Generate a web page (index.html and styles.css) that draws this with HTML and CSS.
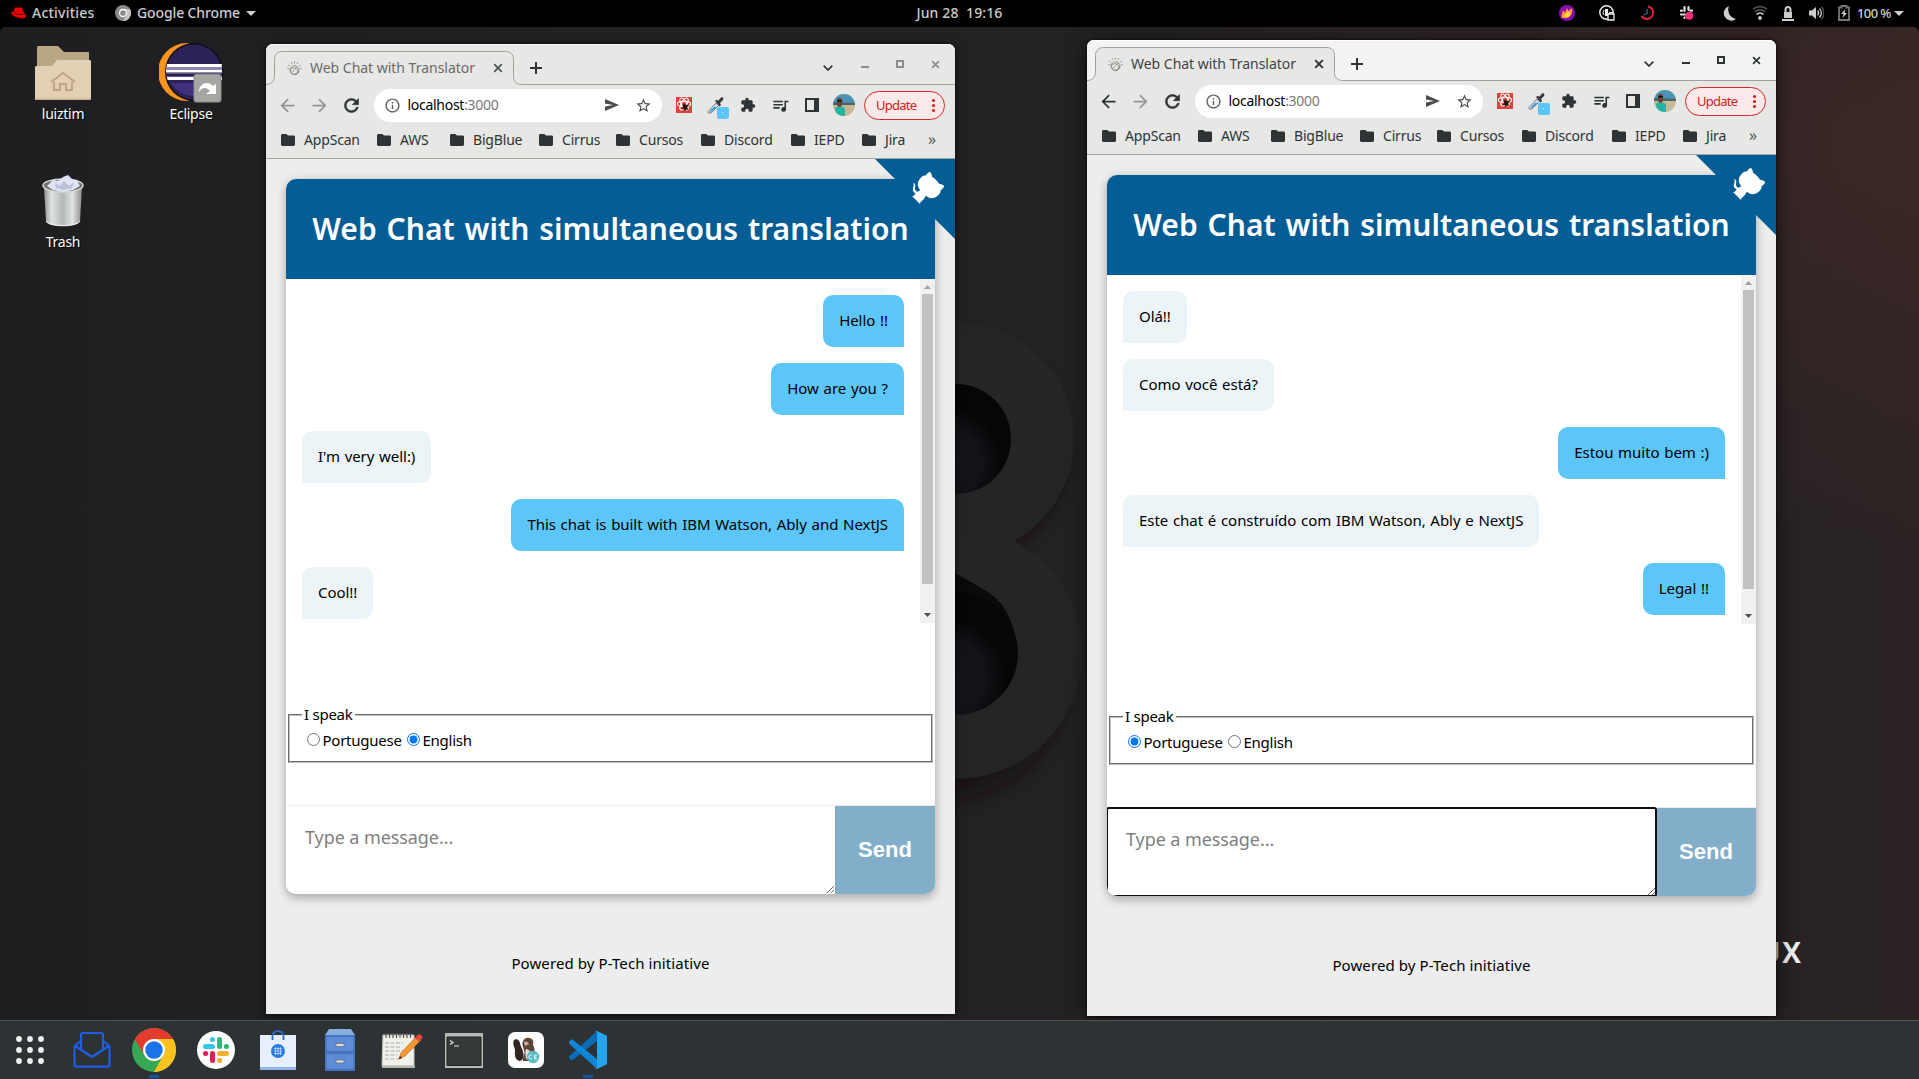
FILE: index.html
```html
<!DOCTYPE html>
<html lang="en">
<head>
<meta charset="utf-8">
<title>Desktop</title>
<link rel="stylesheet" href="styles.css">
</head>
<body>

<svg class="sprite" aria-hidden="true">
  <symbol id="i-back" viewBox="0 0 24 24"><path d="M20 11H7.83l5.59-5.59L12 4l-8 8 8 8 1.41-1.41L7.83 13H20z"/></symbol>
  <symbol id="i-forward" viewBox="0 0 24 24"><path d="M4 11h12.17l-5.59-5.59L12 4l8 8-8 8-1.41-1.41L16.17 13H4z"/></symbol>
  <symbol id="i-reload" viewBox="0 0 24 24"><path d="M17.65 6.35A7.96 7.96 0 0 0 12 4c-4.42 0-7.99 3.58-7.99 8s3.57 8 7.99 8c3.73 0 6.84-2.55 7.73-6h-2.08A5.99 5.99 0 0 1 12 18c-3.31 0-6-2.69-6-6s2.69-6 6-6c1.66 0 3.14.69 4.22 1.78L13 11h7V4z" stroke="currentColor" stroke-width=".7"/></symbol>
  <symbol id="i-info" viewBox="0 0 24 24"><path d="M11 7h2v2h-2zm0 4h2v6h-2zm1-9C6.48 2 2 6.48 2 12s4.48 10 10 10 10-4.48 10-10S17.52 2 12 2zm0 18c-4.41 0-8-3.59-8-8s3.59-8 8-8 8 3.59 8 8-3.59 8-8 8z"/></symbol>
  <symbol id="i-send" viewBox="0 0 14 12"><path d="M0 0l14 6-14 6V7.4L8 6 0 4.6z"/></symbol>
  <symbol id="i-star" viewBox="0 0 24 24"><path d="M22 9.24l-7.19-.62L12 2 9.19 8.63 2 9.24l5.46 4.73L5.82 21 12 17.27 18.18 21l-1.63-7.03zM12 15.4l-3.76 2.27 1-4.28-3.32-2.88 4.38-.38L12 6.1l1.71 4.04 4.38.38-3.32 2.88 1 4.28z"/></symbol>
  <symbol id="i-puzzle" viewBox="0 0 24 24"><path d="M20.5 11H19V7c0-1.1-.9-2-2-2h-4V3.5a2.5 2.5 0 0 0-5 0V5H4c-1.1 0-1.99.9-1.99 2v3.8H3.5a2.7 2.7 0 0 1 0 5.4H2V20c0 1.1.9 2 2 2h3.8v-1.5a2.7 2.7 0 0 1 5.4 0V22H17c1.1 0 2-.9 2-2v-4h1.5a2.5 2.5 0 0 0 0-5z"/></symbol>
  <symbol id="i-queue" viewBox="0 0 24 24"><path d="M15 6H3v2h12zm0 4H3v2h12zM3 16h8v-2H3zM17 6v8.18A3 3 0 1 0 19 17V8h3V6z"/></symbol>
  <symbol id="i-panel" viewBox="0 0 14 14"><path d="M0 0h14v14H0zm2 2v10h7V2z" fill-rule="evenodd"/></symbol>
  <symbol id="i-folder" viewBox="0 0 14 12"><path d="M1.4 0h4L7 1.6h5.6c.8 0 1.4.6 1.4 1.400v7.600c0 .8-.6 1.400-1.400 1.400H1.400C.6 12 0 11.400 0 10.600V1.400C0 .6.6 0 1.400 0z"/></symbol>
  <symbol id="i-cross" viewBox="0 0 10 10"><path d="M1.2 1.200l7.600 7.600m0-7.600L1.200 8.800" fill="none" stroke="currentColor" stroke-width="1.900"/></symbol>
  <symbol id="i-plus" viewBox="0 0 12 12"><path d="M6 0v12M0 6h12" fill="none" stroke="currentColor" stroke-width="2"/></symbol>
  <symbol id="i-chevron" viewBox="0 0 10 6"><path d="M.7.700L5 5 9.300.700" fill="none" stroke="currentColor" stroke-width="1.700"/></symbol>
  <symbol id="i-min" viewBox="0 0 8 8"><path d="M0 6h8v2H0z"/></symbol>
  <symbol id="i-max" viewBox="0 0 8 8"><path d="M0 0h8v8H0zm2 2v4h4V2z" fill-rule="evenodd"/></symbol>
  <symbol id="i-favicon" viewBox="0 0 16 16"><g fill="none" stroke="currentColor" stroke-width=".8"><circle cx="8" cy="9.800" r="4.800"/><path d="M4.500 8.500c1-2 5.500-2 7 1 1 2.500-1 4.500-3 5M4.200 7.500c-1.200 2 0 5.500 2.800 6.500 2.500.5 5-1.500 5-4M11 6.300L5.500 12M8 .4v2.200M4.400 1.300l.9 1.900M11.600 1.300l-.9 1.900M1.200 4.200l1.800 1.400M14.800 4.200L13 5.600M.3 8l1.800.3M15.700 8l-1.800.3"/></g></symbol>
  <symbol id="i-react" viewBox="0 0 16 16"><path d="M0 0h16v16H0z" fill="#d9453c"/><g fill="none" stroke="#fff" stroke-width="1.100"><ellipse cx="8" cy="7" rx="6.600" ry="2.700"/><ellipse cx="8" cy="7" rx="6.600" ry="2.700" transform="rotate(60 8 7)"/><ellipse cx="8" cy="7" rx="6.600" ry="2.700" transform="rotate(120 8 7)"/></g><path d="M7 7.500l2-.5 1 1 2-.5 1 1.500-2 1 1 3-2-.5-1 1.500-1.500-2-2 .5 1-2z" fill="#2a1412"/></symbol>
  <symbol id="i-dropper" viewBox="0 0 22 22"><path d="M1 14.500L9 6l2.500 2.500L4 16H1z" fill="#c6dcec" stroke="#7d8990"/><path d="M2.500 14.500L7 10h3l-6 5z" fill="#3c9ee0"/><path d="M8 4l1.500-1.200 1.700 1L14 .5c2-1 3 .7 2 2.500l-3 3 1 2-1.500 1.500z" fill="#3a3a3e"/><rect x="10" y="10" width="12" height="12" rx="2" fill="#5dc6f8"/><path d="M15 15h1v1h-1z" fill="#d8f0fc"/></symbol>
  <symbol id="i-avatar" viewBox="0 0 22 22"><clipPath id="avatar-clip"><circle cx="11" cy="11" r="11"/></clipPath><g clip-path="url(#avatar-clip)"><path d="M0 0h22v22H0z" fill="#c9b796"/><path d="M0 0h22v8.500H0z" fill="#4d93b8"/><path d="M0 8l22 .5V11H0z" fill="#3f6873"/><path d="M2 14c2-2 9-2 10 1v7H3z" fill="#22b59f"/><path d="M4 6c0-3 5-3 5 0v4c0 4-5 4-5 0z" fill="#6b4433"/><path d="M4 6h5v1.500H4z" fill="#141414"/></g></symbol>
  <symbol id="i-octocat" viewBox="0 0 250 250"><path d="M0 0l250 250V0z" fill="#045d95"/><path d="M128.3 109C113.800 99.700 119 89.600 119 89.600c3-6.900 1.500-11 1.500-11-1.300-6.600 2.900-2.300 2.900-2.300 3.900 4.600 2.100 11 2.100 11-2.600 10.300 5.100 14.600 8.900 15.900zM115 115c-.1.100 3.700 1.500 4.800.4l13.900-13.800c3.200-2.400 6.200-3.200 8.500-3-8.400-10.600-14.700-24.200 1.600-40.600 4.700-4.600 10.200-6.800 15.900-7 .6-1.600 3.500-7.400 11.700-10.900 0 0 4.700 2.400 7.400 16.100 4.300 2.400 8.400 5.600 12.100 9.200 3.600 3.600 6.800 7.800 9.200 12.200 13.700 2.600 16.200 7.300 16.200 7.300-3.600 8.200-9.400 11.100-10.900 11.700-.3 5.800-2.400 11.200-7.100 15.900-16.400 16.400-30 10-40.600 1.600.2 2.800-1 6.800-5 10.800L141 136.500c-1.200 1.200.6 5.400.8 5.300z" fill="#fff"/></symbol>
  <symbol id="i-up" viewBox="0 0 7 4"><path d="M0 4l3.500-4L7 4z"/></symbol>
  <symbol id="i-down" viewBox="0 0 7 4"><path d="M0 0l3.500 4L7 0z"/></symbol>
</svg>

<header class="topbar">
  <div class="topbar-left">
    <svg class="hat" viewBox="0 0 15 12"><path d="M3.500 1.500C4 .3 5 0 6 .4c1.300.5 2 .3 3-.1 2-.6 3 1.500 3.500 5.200C15 7 16 9.500 13.500 11 10 12.500 2 10 .3 6.500-.3 5 1 4.700 2.600 4.600z" fill="#e00"/><path d="M2.800 5c1.500 2 6 3.400 9.500 2" fill="none" stroke="#300" stroke-width=".9"/></svg>
    <span class="tb-activities">Activities</span>
    <svg class="tb-chrome" viewBox="0 0 16 16"><circle cx="8" cy="8" r="8" fill="#8b8b8b"/><path d="M8 4h7A8 8 0 0 1 8 16l4-6z" fill="#c4c4c4"/><circle cx="8" cy="8" r="3.500" fill="#8b8b8b" stroke="#fff" stroke-width="1.300"/></svg>
    <span class="tb-app">Google Chrome</span>
    <svg class="tb-caret" viewBox="0 0 10 5"><path d="M0 0h10L5 5z" fill="#ccc"/></svg>
  </div>
  <div class="clock">Jun 28&nbsp; 19:16</div>
  <div class="tray">
    <svg viewBox="0 0 16 16"><circle cx="8" cy="8" r="8" fill="#8a0fae"/><path d="M3 13c-1-4 1-5 1-8l2 3 2-5 1.500 3L13 3c1 4-1 9-5 10z" fill="#ff9d2e"/><path d="M5 12c0-3 3-3 4-6l2 2c1 3-2 5-6 4z" fill="#ffd84a"/></svg>
    <svg viewBox="0 0 16 16"><circle cx="7.500" cy="7.500" r="6.700" fill="none" stroke="#eee" stroke-width="1.400"/><path d="M6 4h3v7H6z" fill="#eee"/><path d="M5 5a4 4 0 0 0 0 5" stroke="#eee" fill="none"/><path d="M9 9h6v6H9z" fill="#000" stroke="#eee" stroke-width="1.300"/><path d="M10.500 9V7.500h3V9" fill="none" stroke="#eee"/></svg>
    <svg viewBox="0 0 16 16"><path d="M9 1.500A6.300 6.300 0 1 1 2.500 11" fill="none" stroke="#e0203c" stroke-width="1.900"/><path d="M8 4v4.500L4.500 10" fill="none" stroke="#2a6d86" stroke-width="1.300"/></svg>
    <svg viewBox="0 0 16 16"><g stroke="#ddd" stroke-width="2.200" stroke-linecap="round"><path d="M5.500 2v4M2 5.700h1M9.500 2v3M11.500 5.700h1.500M2 9.500h4M5.500 12.500v.5"/></g><circle cx="10.300" cy="10.800" r="4" fill="#f02d78"/></svg>
    <svg class="tray-moon" viewBox="0 0 16 16"><path d="M7 1a9.500 9.500 0 0 0 7 13A7.500 7.500 0 1 1 7 1z" fill="#ccc"/></svg>
    <svg viewBox="0 0 16 16"><circle cx="8" cy="13" r="1.900" fill="#ccc"/><path d="M4.500 9.500a5 5 0 0 1 7 0" fill="none" stroke="#ccc" stroke-width="1.700"/><path d="M2.700 7a7.800 7.800 0 0 1 10.600 0M1 4.300a10.500 10.500 0 0 1 14 0" fill="none" stroke="#4d4d4d" stroke-width="1.700"/></svg>
    <svg viewBox="0 0 16 16"><path d="M4 7h8v6H4zM2 14h12v2H2z" fill="#ccc"/><path d="M5.500 7.500V4.500a2.500 2.500 0 0 1 5 0v3" fill="none" stroke="#ccc" stroke-width="2"/></svg>
    <svg viewBox="0 0 16 16"><path d="M1 5.500h3L8 2v12l-4-3.500H1z" fill="#ccc"/><path d="M9.700 5.500a4 4 0 0 1 0 5M11.500 3.500a6.500 6.500 0 0 1 0 9" fill="none" stroke="#ccc" stroke-width="1.300"/><path d="M13.500 2a8.500 8.500 0 0 1 0 12" fill="none" stroke="#555" stroke-width="1.300"/></svg>
    <svg viewBox="0 0 16 16"><path d="M3 2.500h2.500V1h5v1.500H13V15H3z" fill="none" stroke="#777" stroke-width="1.800"/><path d="M9.500 4L5 9h2.500L6.500 13 11 8H8.500z" fill="#ccc"/></svg>
    <span class="battery">100 %</span>
    <svg class="tb-caret" viewBox="0 0 10 5"><path d="M0 0h10L5 5z" fill="#ccc"/></svg>
  </div>
</header>

<main class="desktop">
  <svg class="wallpaper" viewBox="0 27 1919 993" preserveAspectRatio="none">
    <defs>
      <linearGradient id="wall" x1="0" y1="0" x2="1" y2="0"><stop offset="0" stop-color="#1f1f21"/><stop offset=".4" stop-color="#222123"/><stop offset=".6" stop-color="#242123"/><stop offset=".94" stop-color="#282224"/><stop offset="1" stop-color="#2b2323"/></linearGradient>
      <radialGradient id="glow" cx="1" cy=".12" r=".4"><stop offset="0" stop-color="#4a2c28" stop-opacity=".55"/><stop offset="1" stop-color="#4a2c28" stop-opacity="0"/></radialGradient>
      <radialGradient id="hole" cx=".42" cy=".7" r=".48"><stop offset="0" stop-color="#15171c"/><stop offset=".65" stop-color="#111317"/><stop offset="1" stop-color="#070607"/></radialGradient>
      <linearGradient id="ring" x1="0" y1="0" x2="0" y2="1"><stop offset="0" stop-color="#272427"/><stop offset=".5" stop-color="#252527"/><stop offset="1" stop-color="#232425"/></linearGradient>
      <filter id="soft"><feGaussianBlur stdDeviation="9"/></filter>
    </defs>
    <path d="M0 27h1919v993H0z" fill="url(#wall)"/>
    <path d="M0 27h1919v993H0z" fill="url(#glow)"/>
    <g fill="#120d0d" opacity=".75" filter="url(#soft)"><circle cx="955" cy="449" r="110"/><circle cx="942" cy="674" r="124"/></g>
    <circle cx="957" cy="439" r="117" fill="url(#ring)"/>
    <circle cx="956" cy="439" r="55" fill="url(#hole)"/>
    <circle cx="956" cy="653" r="126" fill="url(#ring)"/>
    <path d="M955 573l28 16c18 10 28 25 33 50h-61z" fill="#0b090a"/>
    <circle cx="956" cy="653" r="62" fill="url(#hole)"/>
  </svg>
  <div class="wall-word">LINUX</div>

  <div class="shortcut home">
    <svg viewBox="0 0 56 54" width="56" height="54"><path d="M2 1.500C2 .6 2.600 0 3.500 0H23l6 6h24c.6 0 1 .4 1 1v20H2z" fill="#b9a683"/><path d="M0 21.500c0-.9.600-1.500 1.500-1.500H17l5-6h32.500c.9 0 1.500.6 1.500 1.500V53H0z" fill="#e3d0b4"/><path d="M0 52.500h56V54H0z" fill="#c5af8c"/><path d="M16 36l12-9 12 9M19 36v8h6v-6h6v6h6v-8" fill="none" stroke="#bea586" stroke-width="2"/></svg>
    <span>luiztim</span>
  </div>
  <div class="shortcut eclipse">
    <svg viewBox="0 0 64 60" width="64" height="60"><path d="M28 0a29 29 0 0 0 0 58l4-1V1z" fill="#f7941e"/><circle cx="35" cy="29" r="29" fill="#100d20"/><circle cx="35" cy="29" r="27.500" fill="#2c2255"/><path d="M12 40a27 27 0 0 0 46 0z" fill="#40307e"/><path d="M7.800 21h55v3H7.700zM7 27h56v2.500H7zM8 34h55v3H8.500z" fill="#fff"/><path d="M7 24h56v3H7zM7 29.500h56V34H7z" fill="#8d86ae"/><path d="M7 30.500h56v3H7z" fill="#2c2255"/><rect x="35" y="31.500" width="27" height="27.500" rx="2" fill="#a5a8a2" stroke="#8c8f8a"/><path d="M40 49c0-9 9-12 14-6l3-2v10H47l4-3c-3-4-8-4-11 1z" fill="#fff"/></svg>
    <span>Eclipse</span>
  </div>
  <div class="shortcut trash">
    <svg viewBox="0 0 44 52" width="44" height="52"><defs><linearGradient id="can" x1="0" x2="1" y1="0" y2="0"><stop offset="0" stop-color="#8f9490"/><stop offset=".2" stop-color="#dfe2df"/><stop offset=".5" stop-color="#b4b8b4"/><stop offset=".75" stop-color="#e2e4e2"/><stop offset="1" stop-color="#868a86"/></linearGradient></defs><path d="M3 12l2 34c1 7 33 7 34 0l2-34z" fill="url(#can)"/><ellipse cx="22" cy="10.500" rx="20" ry="6.500" fill="#6d716d" stroke="#d5d8d5" stroke-width="1.500"/><path d="M6 11l6-6 5 1 5-4 5-2 4 4 5 1 3 6-7 4-10 2-10-2z" fill="#dfe3f3"/><path d="M14 8l5 3 4-5 5 5 5-4-2 6-9 2-7-2z" fill="#b9c0d8"/><path d="M5 46c3 6 31 6 34 0" fill="none" stroke="#f0f0f0"/></svg>
    <span>Trash</span>
  </div>

  <section class="window window-left">
    <div class="tabstrip">
      <svg class="tab-outline" viewBox="0 0 689 41"><path d="M0 40.500c5 0 8.500-3 8.500-9V15.500c0-5 3-8 8-8h223c5 0 8 3 8 8v17c0 5 3 8 8 8H689V41H0z" fill="#e7e7e5"/><path d="M0 40.500c5 0 8.500-3 8.500-9V15.500c0-5 3-8 8-8h223c5 0 8 3 8 8v17c0 5 3 8 8 8H689" fill="none" stroke="#a0a09d"/></svg>
      <div class="tab"><svg class="favicon"><use href="#i-favicon"/></svg><span class="tab-title">Web Chat with Translator</span><svg class="tab-close"><use href="#i-cross"/></svg></div>
      <svg class="new-tab"><use href="#i-plus"/></svg>
      <div class="window-controls"><svg class="ctl-chevron"><use href="#i-chevron"/></svg><svg class="ctl"><use href="#i-min"/></svg><svg class="ctl"><use href="#i-max"/></svg><svg class="ctl"><use href="#i-cross"/></svg></div>
    </div>
    <div class="toolbar">
      <svg class="nav off"><use href="#i-back"/></svg><svg class="nav off"><use href="#i-forward"/></svg><svg class="nav"><use href="#i-reload"/></svg>
      <div class="address"><svg class="a-info"><use href="#i-info"/></svg><span class="url">localhost<span class="port">:3000</span></span><svg class="a-send"><use href="#i-send"/></svg><svg class="a-star"><use href="#i-star"/></svg></div>
      <div class="extensions"><svg class="e16"><use href="#i-react"/></svg><svg class="e22"><use href="#i-dropper"/></svg><svg class="e16"><use href="#i-puzzle"/></svg><svg class="e20"><use href="#i-queue"/></svg><svg class="e14"><use href="#i-panel"/></svg><svg class="eav"><use href="#i-avatar"/></svg></div>
      <div class="update"><span>Update</span><i></i></div>
    </div>
    <div class="bookmarks">
      <a><svg><use href="#i-folder"/></svg>AppScan</a><a><svg><use href="#i-folder"/></svg>AWS</a><a><svg><use href="#i-folder"/></svg>BigBlue</a><a><svg><use href="#i-folder"/></svg>Cirrus</a><a><svg><use href="#i-folder"/></svg>Cursos</a><a><svg><use href="#i-folder"/></svg>Discord</a><a><svg><use href="#i-folder"/></svg>IEPD</a><a><svg><use href="#i-folder"/></svg>Jira</a><span class="more">»</span>
    </div>
    <div class="page">
      <svg class="corner"><use href="#i-octocat"/></svg>
      <div class="card">
        <h1>Web Chat with simultaneous translation</h1>
        <div class="chat">
          <div class="messages">
            <p class="msg mine">Hello !!</p>
            <p class="msg mine">How are you ?</p>
            <p class="msg">I'm very well:)</p>
            <p class="msg mine">This chat is built with IBM Watson, Ably and NextJS</p>
            <p class="msg">Cool!!</p>
          </div>
          <div class="scrollbar"><svg class="sb-up"><use href="#i-up"/></svg><div class="thumb"></div><svg class="sb-down"><use href="#i-down"/></svg></div>
        </div>
        <form class="composer">
          <fieldset><legend>I speak</legend><div class="langs"><label><input type="radio" name="lang"><span>Portuguese</span></label><label><input type="radio" name="lang" checked><span>English</span></label></div></fieldset>
          <div class="entry"><textarea placeholder="Type a message..."></textarea><button type="button">Send</button></div>
        </form>
      </div>
      <footer>Powered by P-Tech initiative</footer>
    </div>
  </section>

  <section class="window window-right active">
    <div class="tabstrip">
      <svg class="tab-outline" viewBox="0 0 689 41"><path d="M0 40.500c5 0 8.500-3 8.500-9V15.500c0-5 3-8 8-8h223c5 0 8 3 8 8v17c0 5 3 8 8 8H689V41H0z" fill="#e7e7e5"/><path d="M0 40.500c5 0 8.500-3 8.500-9V15.500c0-5 3-8 8-8h223c5 0 8 3 8 8v17c0 5 3 8 8 8H689" fill="none" stroke="#a0a09d"/></svg>
      <div class="tab"><svg class="favicon"><use href="#i-favicon"/></svg><span class="tab-title">Web Chat with Translator</span><svg class="tab-close"><use href="#i-cross"/></svg></div>
      <svg class="new-tab"><use href="#i-plus"/></svg>
      <div class="window-controls"><svg class="ctl-chevron"><use href="#i-chevron"/></svg><svg class="ctl"><use href="#i-min"/></svg><svg class="ctl"><use href="#i-max"/></svg><svg class="ctl"><use href="#i-cross"/></svg></div>
    </div>
    <div class="toolbar">
      <svg class="nav"><use href="#i-back"/></svg><svg class="nav off"><use href="#i-forward"/></svg><svg class="nav"><use href="#i-reload"/></svg>
      <div class="address"><svg class="a-info"><use href="#i-info"/></svg><span class="url">localhost<span class="port">:3000</span></span><svg class="a-send"><use href="#i-send"/></svg><svg class="a-star"><use href="#i-star"/></svg></div>
      <div class="extensions"><svg class="e16"><use href="#i-react"/></svg><svg class="e22"><use href="#i-dropper"/></svg><svg class="e16"><use href="#i-puzzle"/></svg><svg class="e20"><use href="#i-queue"/></svg><svg class="e14"><use href="#i-panel"/></svg><svg class="eav"><use href="#i-avatar"/></svg></div>
      <div class="update"><span>Update</span><i></i></div>
    </div>
    <div class="bookmarks">
      <a><svg><use href="#i-folder"/></svg>AppScan</a><a><svg><use href="#i-folder"/></svg>AWS</a><a><svg><use href="#i-folder"/></svg>BigBlue</a><a><svg><use href="#i-folder"/></svg>Cirrus</a><a><svg><use href="#i-folder"/></svg>Cursos</a><a><svg><use href="#i-folder"/></svg>Discord</a><a><svg><use href="#i-folder"/></svg>IEPD</a><a><svg><use href="#i-folder"/></svg>Jira</a><span class="more">»</span>
    </div>
    <div class="page">
      <svg class="corner"><use href="#i-octocat"/></svg>
      <div class="card">
        <h1>Web Chat with simultaneous translation</h1>
        <div class="chat">
          <div class="messages">
            <p class="msg">Olá!!</p>
            <p class="msg">Como você está?</p>
            <p class="msg mine">Estou muito bem :)</p>
            <p class="msg">Este chat é construído com IBM Watson, Ably e NextJS</p>
            <p class="msg mine">Legal !!</p>
          </div>
          <div class="scrollbar"><svg class="sb-up"><use href="#i-up"/></svg><div class="thumb"></div><svg class="sb-down"><use href="#i-down"/></svg></div>
        </div>
        <form class="composer">
          <fieldset><legend>I speak</legend><div class="langs"><label><input type="radio" name="lang" checked><span>Portuguese</span></label><label><input type="radio" name="lang"><span>English</span></label></div></fieldset>
          <div class="entry"><textarea class="focused" placeholder="Type a message..."></textarea><button type="button">Send</button></div>
        </form>
      </div>
      <footer>Powered by P-Tech initiative</footer>
    </div>
  </section>
</main>

<nav class="dock">
  <div class="dock-item"><svg class="apps" width="28" height="28" viewBox="0 0 28 28"><circle cx="3" cy="3" r="2.900"/><circle cx="14" cy="3" r="2.900"/><circle cx="25" cy="3" r="2.900"/><circle cx="3" cy="14" r="2.900"/><circle cx="14" cy="14" r="2.900"/><circle cx="25" cy="14" r="2.900"/><circle cx="3" cy="25" r="2.900"/><circle cx="14" cy="25" r="2.900"/><circle cx="25" cy="25" r="2.900"/></svg></div>
  <div class="dock-item"><svg width="38" height="36" viewBox="0 0 38 36"><g fill="none" stroke="#1f5ce6" stroke-width="2.200" stroke-linejoin="round"><path d="M8 9L1.500 14v19c0 1 .5 1.600 1.500 1.600h32c1 0 1.500-.6 1.500-1.600V14L30 9"/><path d="M8 17V3c0-1.300.6-2 2-2h18c1.400 0 2 .7 2 2v14"/><path d="M1.500 13.500L19 25l17.500-11.500"/></g></svg></div>
  <div class="dock-item running"><svg width="44" height="44" viewBox="0 0 44 44"><circle cx="22" cy="22" r="22" fill="#34a853"/><path d="M2.950 11A22 22 0 0 1 41.050 11H22L13 27z" fill="#e33b2e"/><path d="M41.050 11A22 22 0 0 1 22 44l9.500-16.500L22 11z" fill="#fcc31e"/><path d="M2.950 11L12.500 27.500 22 22V11z" fill="#e33b2e"/><path d="M31.500 27.500L22 44a22 22 0 0 0 3-.2z" fill="#fcc31e"/><circle cx="22" cy="22" r="11" fill="#fff"/><circle cx="22" cy="22" r="8.700" fill="#1a73e8"/></svg></div>
  <div class="dock-item"><svg width="38" height="38" viewBox="0 0 38 38"><circle cx="19" cy="19" r="19" fill="#fff"/><g stroke-width="5" stroke-linecap="round"><path d="M15.500 8.500h-.2M8.500 15.500h7" stroke="#36c5f0"/><path d="M22.500 8.500v7M29.500 15.500h-.2" stroke="#2eb67d"/><path d="M22.500 22.500h7M22.500 29.500h.2" stroke="#ecb22e"/><path d="M15.500 22.500v7M8.500 22.500h.2" stroke="#e01e5a"/></g></svg></div>
  <div class="dock-item"><svg width="36" height="40" viewBox="0 0 36 40"><path d="M0 5h36v35H0z" fill="#e8effc"/><path d="M0 37h36v3H0z" fill="#8fb5ea"/><path d="M12.500 10V6a5.500 5 0 0 1 11 0v4" fill="none" stroke="#2c6cc8" stroke-width="1.800"/><circle cx="18" cy="21" r="7" fill="#2a7be0"/><path d="M14 18.500h8M14 21h8M14 23.500h8M15.500 17v8M18 17v8M20.500 17v8" stroke="#cfe0fa" stroke-width=".7"/></svg></div>
  <div class="dock-item"><svg width="30" height="42" viewBox="0 0 30 42"><path d="M4 0h22l4 6H0z" fill="#88aede"/><path d="M0 6h30v36H0z" fill="#4373bd"/><path d="M1.500 8h27v14h-27zM1.500 25h27v15h-27z" fill="#5c8cd5"/><path d="M11 14.500h8v3h-8zM11 31h8v3h-8z" fill="#dedede" stroke="#666" stroke-width=".7"/></svg></div>
  <div class="dock-item"><svg width="42" height="36" viewBox="0 0 42 36"><path d="M2 3h31v31H1z" fill="#f1f1ec" stroke="#c5c5bd"/><path d="M1 33.500h33V36H1z" fill="#b7b7ae"/><path d="M5 1v5M8.500 1v5M12 1v5M15.500 1v5M19 1v5M22.500 1v5M26 1v5M29.500 1v5" stroke="#555" stroke-width="1.200"/><path d="M4 11h18M4 15h16M4 19h18M4 23h12M4 27h14" stroke="#aaa" stroke-dasharray="4 1.500"/><path d="M18 27l2-6L36 4l4 4-16 16z" fill="#f59a32" stroke="#b96513" stroke-width=".7"/><path d="M34 6l3-3.500c1.500-1.500 6 2 4 4L38 10z" fill="#e2483c"/><path d="M18 27l1-3 2 2z" fill="#222"/></svg></div>
  <div class="dock-item"><svg width="38" height="36" viewBox="0 0 38 36"><path d="M0 1h38v35H0z" fill="#b9bab5"/><path d="M2 5h34v28.500H2z" fill="#333a37" stroke="#222"/><path d="M5 8.500l3 2-3 2M9 14h5" fill="none" stroke="#e8e8e8" stroke-width="1.200"/></svg></div>
  <div class="dock-item"><svg width="36" height="36" viewBox="0 0 36 36"><rect width="36" height="36" rx="7" fill="#fff"/><path d="M5.500 9c1-3 6-2 6.500 2 .5 4 3 6 3.500 11 .3 4-1.500 7-4 7-4-1-5-5-4.500-10C7 15 4.500 13 5.500 9z" fill="#33251f"/><path d="M14.500 13c-.5-5 3-8 6.500-7 4 0 5 4 4 7 3 5 2 12-2 16h-8c-1-3 1.500-5 1.500-9z" fill="#5f4336"/><path d="M18 17c3 0 5 3 4.500 7L19 28c-2-3-2-8-1-11z" fill="#e9e0d5"/><path d="M16 10c2-1 4 0 5 2l-4 2z" fill="#c7b7a6"/><circle cx="25" cy="25" r="6.200" fill="#5bbcc0"/><path d="M24 23.200a2 2 0 1 0 0 3.400M29 23h-2.500v4H29M26.500 25h2" fill="none" stroke="#e6f6f6" stroke-width="1"/></svg></div>
  <div class="dock-item running"><svg width="38" height="38" viewBox="0 0 38 38"><path d="M28 0v10L4 29c-.8.600-1.500.500-2.200 0L.5 27.500c-.7-.8-.7-1.700 0-2.500z" fill="#0a6cb5"/><path d="M28 38V28L4 9c-.8-.6-1.500-.5-2.200 0L.5 10.500c-.7.8-.7 1.700 0 2.500z" fill="#1186d6"/><path d="M28 0l9 4.200c.7.400 1 .8 1 1.600v26.400c0 .8-.3 1.200-1 1.600L28 38c-1 0-1.500-.5-2-1 1.300.6 2 0 2-1.300V2.300C28 1 27.300.4 26 1c.5-.6 1-1 2-1z" fill="#27a4f0"/></svg></div>
</nav>
</body>
</html>
```
FILE: styles.css
```css
* { box-sizing: border-box; }
html, body { margin: 0; height: 100%; }
body {
  display: flex;
  flex-direction: column;
  width: 1919px;
  height: 1079px;
  overflow: hidden;
  background: #000;
  font-family: "Noto Sans", "Open Sans", sans-serif;
  font-size: 15px;
  color: #000;
}
svg { display: block; flex: none; fill: currentColor; }
.sprite { position: absolute; width: 0; height: 0; }

/* ---- top bar ---- */
.topbar {
  flex: none;
  height: 27px;
  display: grid;
  grid-template-columns: 1fr auto 1fr;
  align-items: center;
  color: #ccc;
  font-size: 14px;
  font-weight: 500;
  padding-bottom: 1px;
}
.topbar span, .clock { margin-top: -1px; }
.topbar-left { display: flex; align-items: center; padding-left: 11px; }
.hat { width: 15px; height: 12px; margin-right: 6px; }
.tb-activities { width: 83px; letter-spacing: .22px; }
.tb-chrome { width: 16px; height: 16px; margin-right: 6px; }
.tb-app { width: 109px; letter-spacing: -.12px; }
.tb-caret { width: 10px; height: 5px; }
.clock { letter-spacing: .12px; }
.tray { display: flex; align-items: center; justify-content: flex-end; padding-right: 15px; }
.tray svg:not(.tb-caret) { width: 16px; height: 16px; margin-right: 12px; }
.tray svg:nth-child(-n+3) { margin-right: 24px !important; }
.tray svg:nth-child(4) { margin-right: 27px !important; }
.tray .tray-moon { margin-right: 14px !important; }
.tray svg:nth-child(9) { margin-right: 5px !important; }
.battery { width: 37px; font-size: 13px; letter-spacing: -.6px; white-space: nowrap; }

/* ---- desktop ---- */
.desktop { position: relative; flex: 1; overflow: hidden; border-radius: 6px 6px 0 0; background: #202022; }
.wallpaper { position: absolute; inset: 0; width: 100%; height: 100%; }
.wall-word {
  position: absolute;
  right: 116px;
  top: 906px;
  font: 700 28px/38px "Open Sans", sans-serif;
  letter-spacing: 2px;
  color: #eee;
}
.shortcut {
  position: absolute;
  display: flex;
  flex-direction: column;
  align-items: center;
  width: 100px;
  color: #fff;
  font-size: 14px;
  line-height: 20px;
  letter-spacing: -.25px;
  text-shadow: 1px 1px 1px #000;
}
.shortcut span { margin-top: 4px; }
.home { left: 13px; top: 19px; }
.eclipse { left: 141px; top: 16px; }
.eclipse span { margin-top: 1px; }
.trash { left: 13px; top: 148px; }
.trash span { margin-top: 5px; }

/* ---- browser window ---- */
.window {
  position: absolute;
  display: flex;
  flex-direction: column;
  width: 689px;
  background: #ededed;
  border-radius: 7px 7px 0 0;
  box-shadow: 0 0 3px rgba(0, 0, 0, .7), 0 2px 12px rgba(0, 0, 0, .4);
  color: #2e3436;
}
.window-left { left: 266px; top: 17px; height: 970px; }
.window-right { left: 1087px; top: 13px; height: 976px; }
.active { box-shadow: 0 0 3px rgba(0, 0, 0, .8), 0 3px 20px rgba(0, 0, 0, .6); }

.tabstrip {
  position: relative;
  flex: none;
  height: 41px;
  display: flex;
  align-items: center;
  padding-top: 7px;
  border-radius: 7px 7px 0 0;
  background: #e7e7e5;
  box-shadow: inset 0 1px #f8f8f8;
}
.active .tabstrip { background: #f3f3f3; box-shadow: inset 0 1px #fff; }
.tab-outline { position: absolute; left: 0; top: 0; width: 689px; height: 41px; }
.tab { position: relative; display: flex; align-items: center; width: 248px; padding-left: 21px; font-size: 14px; color: #6a6c6c; }
.active .tab { color: #3e4446; }
.favicon { width: 15px; height: 15px; margin-right: 8px; color: #7c7c7a; }
.active .favicon { color: #7c7c7a; }
.tab-title { width: 183px; margin-top: -2px; letter-spacing: -.02px; }
.tab-close { width: 10px; height: 10px; color: #555a5b; }
.active .tab-close { color: #2e3436; }
.new-tab { position: relative; width: 12px; height: 12px; margin-left: 16px; color: #2e3436; }
.window-controls { position: relative; display: flex; align-items: center; margin-left: auto; margin-right: 15px; color: #8b8e8e; }
.active .window-controls { color: #2e3436; }
.ctl-chevron { width: 10px; height: 6px; margin-right: 28px; color: #2e3436; }
.ctl { width: 8px; height: 8px; margin: -8px 27px 0 0; }
.ctl:last-child { width: 9px; height: 9px; margin-right: 0; }

.toolbar { flex: none; display: flex; align-items: center; height: 41px; padding: 0 10px 1px 11px; background: #e7e7e5; }
.nav { width: 21px; height: 21px; margin-right: 11px; }
.nav.off { color: #949796; }
.address { display: flex; align-items: center; width: 288px; height: 33px; margin-left: 1px; padding-left: 9.500px; border-radius: 17px; background: #fff; font-size: 14px; }
.a-info { width: 17px; height: 17px; margin-right: 7px; color: #5f6368; }
.url { width: 197px; margin-top: -1px; color: #000; letter-spacing: -.28px; }
.port { color: #75787a; }
.a-send { width: 14px; height: 12px; margin-right: 16px; color: #4a4d4f; }
.a-star { width: 17px; height: 17px; color: #4a4d4f; }
.extensions { display: grid; grid-template-columns: repeat(6, 32px); align-items: center; justify-items: center; margin-left: 6px; }
.e14 { width: 14px; height: 14px; }
.e16 { width: 16px; height: 16px; }
.e20 { width: 19px; height: 19px; }
.e22 { width: 22px; height: 22px; margin: 6px 0 0 3px; }
.eav { width: 22px; height: 22px; }
.update { display: flex; align-items: center; width: 81px; height: 29px; margin-left: 4px; padding-left: 11px; border: 1px solid #d02a2a; border-radius: 15px; background: #fae9e8; color: #cc2424; font-size: 13px; letter-spacing: -.75px; }
.update span { width: 55.500px; margin-top: -1px; }
.update i { width: 3px; height: 3px; border-radius: 50%; background: #d01f1f; box-shadow: 0 -5px #d01f1f, 0 5px #d01f1f; }

.bookmarks { flex: none; display: grid; grid-template-columns: 96px 73px 89px 77px 85px 90px 71px 66px auto; align-items: center; justify-content: start; height: 33px; padding: 0 0 5px 15px; background: #e7e7e5; border-bottom: 1px solid #a5a6a0; font-size: 14px; letter-spacing: -.18px; }
.bookmarks a { display: flex; align-items: center; gap: 9px; white-space: nowrap; }
.bookmarks a svg { width: 14px; height: 12px; }
.more { margin-top: -2px; font-size: 16px; color: #55595a; line-height: 20px; }

/* ---- chat page ---- */
.page { position: relative; flex: 1; display: flex; flex-direction: column; padding: 20px 20px 0; background: #ededed; color: #000; }
.corner { position: absolute; right: 0; top: 0; width: 80px; height: 80px; }
.card { display: flex; flex-direction: column; flex: none; width: 649px; height: 715px; overflow: hidden; border-radius: 10px; background: #fff; box-shadow: 0 5px 10px rgba(0, 0, 0, .2), 0 0 10px rgba(0, 0, 0, .12); }
.window-right .card { height: 721px; }
h1 { flex: none; height: 100px; margin: 0; background: #045d95; color: #fff; font-size: 30px; font-weight: 600; line-height: 99px; letter-spacing: .03px; word-spacing: 2px; text-align: center; white-space: nowrap; }
.chat { display: flex; flex: none; height: 344px; }
.window-right .chat { height: 349px; }
.messages { flex: 1; display: flex; flex-direction: column; align-items: flex-start; gap: 16px; padding: 16px; }
.msg { margin: 0; padding: 15px 16px 17px; border-radius: 10px 10px 10px 0; background: #edf4f7; line-height: 20px; letter-spacing: -.05px; word-spacing: .9px; white-space: nowrap; }
.mine { align-self: flex-end; border-radius: 10px 10px 0 10px; background: #5dc6f8; }
.scrollbar { display: flex; flex-direction: column; align-items: center; width: 15px; padding: 6px 0; background: #f1f1f1; }
.sb-up { width: 7px; height: 4px; margin-bottom: 5px; color: #a0a0a0; }
.sb-down { width: 7px; height: 4px; margin-top: auto; color: #4d4d4d; }
.thumb { width: 11px; height: 290px; background: #c1c1c1; }
.window-right .thumb { height: 299px; }

.composer { margin-top: auto; }
fieldset { margin: 0 2px 42px; padding: 6px 12px 10px; border: 2px groove #c0c0c0; line-height: 20px; letter-spacing: -.25px; }
legend { height: 20px; padding: 0 2px; line-height: 18px; }
.langs { display: flex; align-items: center; height: 20px; }
label { display: flex; align-items: center; height: 20px; }
label:first-child { width: 100px; }
label span { margin-top: -2px; }
input { width: 13px; height: 13px; margin: -3px 2.500px 0 5px; accent-color: #0075ff; }
.entry { display: flex; height: 89px; border-top: 1px solid #eaebeb; }
textarea { display: block; width: 549px; height: 88px; padding: 18px 19px; border: 0; border-radius: 0; background: #fff; outline: 0; font: 18px/27px "Noto Sans", sans-serif; letter-spacing: -.08px; }
textarea::placeholder { color: #7f7f7f; }
.focused { outline: 2px solid #101010; outline-offset: -1px; border-radius: 2px; z-index: 1; position: relative; }
button { width: 100px; height: 88px; padding: 0; border: 0; background: #82aec9; color: #fff; font: 700 22px "Liberation Sans", Arial, sans-serif; }
footer { flex: 1; display: flex; align-items: center; justify-content: center; padding-top: 17px; letter-spacing: .09px; }

/* ---- dock ---- */
.dock { flex: none; display: flex; height: 59px; border-top: 1px solid #4e5152; background: #2d3235; }
.dock-item { position: relative; display: flex; align-items: center; justify-content: center; width: 62px; height: 58px; padding-bottom: 1px; }
.dock-item:first-child { margin-left: -1px; }
.apps { color: #f2f2f0; }
.running::after { content: ""; position: absolute; left: 26px; bottom: 1px; width: 10px; height: 3px; background: #15539e; }
```
